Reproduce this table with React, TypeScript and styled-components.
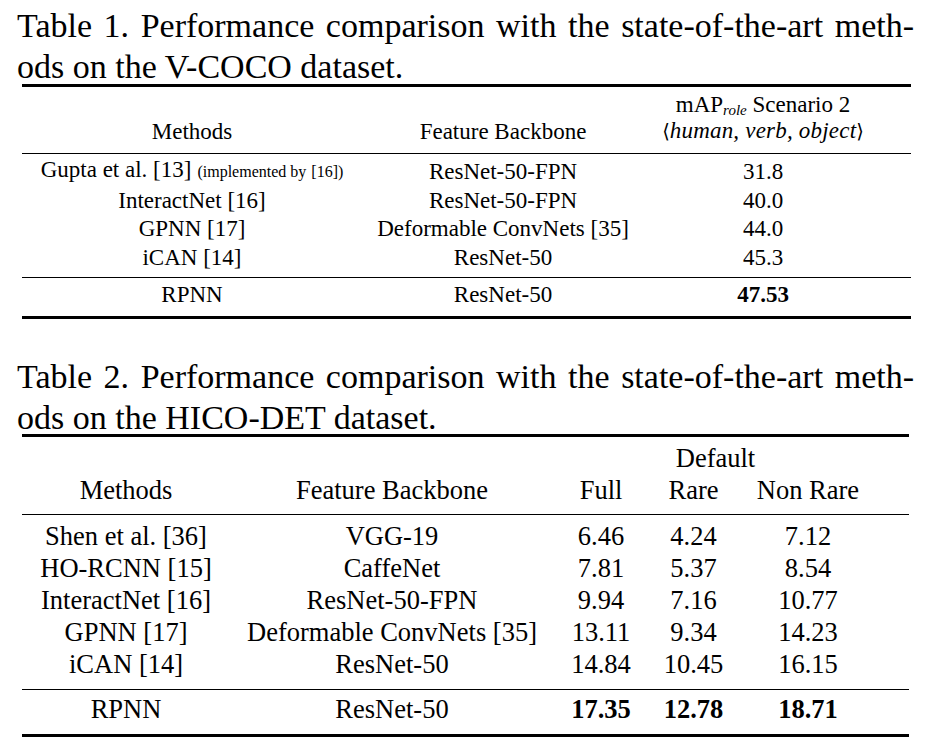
import React from "react";
import styled, { createGlobalStyle } from "styled-components";

const Global = createGlobalStyle`
  html, body { margin: 0; padding: 0; background: #fff; }
  body {
    font-family: "Liberation Serif", "Times New Roman", "DejaVu Serif", serif;
    color: #000;
  }
`;

const Page = styled.div`
  width: 930px;
  height: 748px;
  overflow: hidden;
  box-sizing: border-box;
  padding: 5px 0 0 17px;
`;

const Caption = styled.div<{ $top?: number; $height: number }>`
  width: 897px;
  height: ${(p) => p.$height}px;
  margin-top: ${(p) => p.$top ?? 0}px;
  font-size: 34px;
  line-height: 41px;
`;

const JustifiedLine = styled.div`
  text-align: justify;
  text-align-last: justify;
`;

const PlainLine = styled.div`
  text-align: left;
`;

const Table = styled.div<{ $width: number; $font: number }>`
  margin-left: 5px;
  width: ${(p) => p.$width}px;
  font-size: ${(p) => p.$font}px;
  border-top: 3px solid #000;
  border-bottom: 3px solid #000;
`;

const Section = styled.div<{ $cols: string; $pad: string; $rule: boolean; $line: number }>`
  display: grid;
  grid-template-columns: ${(p) => p.$cols};
  grid-auto-rows: ${(p) => p.$line}px;
  line-height: ${(p) => p.$line}px;
  align-items: end;
  padding: ${(p) => p.$pad};
  border-bottom: ${(p) => (p.$rule ? "1px solid #000" : "none")};
`;

const Cell = styled.div<{ $bold?: boolean; $col?: string; $row?: number }>`
  text-align: center;
  white-space: nowrap;
  font-weight: ${(p) => (p.$bold ? 700 : 400)};
  ${(p) => (p.$col ? `grid-column: ${p.$col};` : "")}
  ${(p) => (p.$row ? `grid-row: ${p.$row};` : "")}
`;

const Small = styled.span`
  font-size: 16px;
  margin-left: 6px;
`;

const RefGap = styled.span`
  margin-left: 5px;
`;

const Sub = styled.span`
  font-size: 15px;
  font-style: italic;
  vertical-align: -3px;
  line-height: 0;
`;

const MathText = styled.span`
  font-style: italic;
  letter-spacing: 0.2px;
`;

const Angle = styled.span`
  font-style: normal;
  font-family: "DejaVu Serif", serif;
  font-size: 0.85em;
`;

const T1_COLS = "340px 282px 238px 1fr";
const T2_COLS = "208px 324px 94px 91px 138px 1fr";

type Row1 = { method: React.ReactNode; backbone: string; score: string };

const table1: Row1[] = [
  {
    method: (
      <>
        Gupta et al. [13]
        <Small>
          (implemented by<RefGap>[16])</RefGap>
        </Small>
      </>
    ),
    backbone: "ResNet-50-FPN",
    score: "31.8",
  },
  { method: "InteractNet [16]", backbone: "ResNet-50-FPN", score: "40.0" },
  { method: "GPNN [17]", backbone: "Deformable ConvNets [35]", score: "44.0" },
  { method: "iCAN [14]", backbone: "ResNet-50", score: "45.3" },
];

const table2: string[][] = [
  ["Shen et al. [36]", "VGG-19", "6.46", "4.24", "7.12"],
  ["HO-RCNN [15]", "CaffeNet", "7.81", "5.37", "8.54"],
  ["InteractNet [16]", "ResNet-50-FPN", "9.94", "7.16", "10.77"],
  ["GPNN [17]", "Deformable ConvNets [35]", "13.11", "9.34", "14.23"],
  ["iCAN [14]", "ResNet-50", "14.84", "10.45", "16.15"],
];

export default function App() {
  return (
    <Page>
      <Global />
      <Caption $height={79}>
        <JustifiedLine>Table 1. Performance comparison with the state-of-the-art meth-</JustifiedLine>
        <PlainLine>ods on the V-COCO dataset.</PlainLine>
      </Caption>
      <Table $width={889} $font={23}>
        <Section $cols={T1_COLS} $pad="4px 0 8px" $rule $line={27}>
          <Cell $col="1" $row={2}>Methods</Cell>
          <Cell $col="2" $row={2}>Feature Backbone</Cell>
          <Cell $col="3" $row={1}>
            mAP<Sub>role</Sub> Scenario 2
          </Cell>
          <Cell $col="3" $row={2}>
            <Angle>⟨</Angle>
            <MathText>human, verb, object</MathText>
            <Angle>⟩</Angle>
          </Cell>
        </Section>
        <Section $cols={T1_COLS} $pad="4px 0 5px" $rule $line={28.5}>
          {table1.map((r, i) => (
            <React.Fragment key={i}>
              <Cell>{r.method}</Cell>
              <Cell>{r.backbone}</Cell>
              <Cell>{r.score}</Cell>
              <div />
            </React.Fragment>
          ))}
        </Section>
        <Section $cols={T1_COLS} $pad="3px 0 6.5px" $rule={false} $line={28.5}>
          <Cell>RPNN</Cell>
          <Cell>ResNet-50</Cell>
          <Cell $bold>47.53</Cell>
        </Section>
      </Table>

      <Caption $height={78} $top={37}>
        <JustifiedLine>Table 2. Performance comparison with the state-of-the-art meth-</JustifiedLine>
        <PlainLine>ods on the HICO-DET dataset.</PlainLine>
      </Caption>
      <Table $width={887} $font={26.5}>
        <Section $cols={T2_COLS} $pad="5px 0 8px" $rule $line={32}>
          <Cell $col="3 / 6" $row={1}>Default</Cell>
          <Cell $col="1" $row={2}>Methods</Cell>
          <Cell $col="2" $row={2}>Feature Backbone</Cell>
          <Cell $col="3" $row={2}>Full</Cell>
          <Cell $col="4" $row={2}>Rare</Cell>
          <Cell $col="5" $row={2}>Non Rare</Cell>
        </Section>
        <Section $cols={T2_COLS} $pad="5px 0 9px" $rule $line={32}>
          {table2.map((r, i) => (
            <React.Fragment key={i}>
              {r.map((c, j) => (
                <Cell key={j}>{c}</Cell>
              ))}
              <div />
            </React.Fragment>
          ))}
        </Section>
        <Section $cols={T2_COLS} $pad="3px 0 9px" $rule={false} $line={32}>
          <Cell>RPNN</Cell>
          <Cell>ResNet-50</Cell>
          <Cell $bold>17.35</Cell>
          <Cell $bold>12.78</Cell>
          <Cell $bold>18.71</Cell>
        </Section>
      </Table>
    </Page>
  );
}
